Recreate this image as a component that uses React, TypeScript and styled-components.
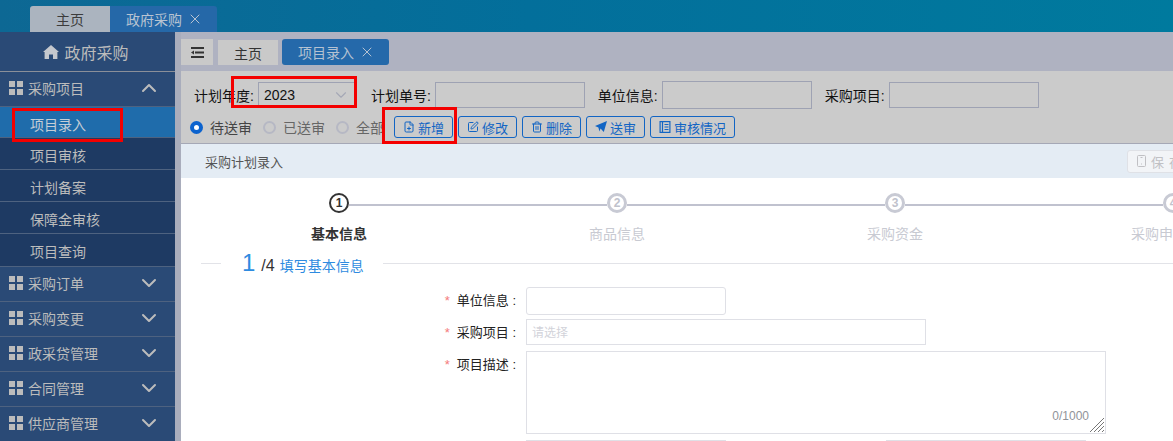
import React from 'react';
import styled, { createGlobalStyle } from 'styled-components';
import { ChevronDown, ChevronUp, X, FilePlus, SquarePen, Trash2 } from 'lucide-react';

const FONT = '"Liberation Sans", "Noto Sans CJK SC", sans-serif';

const GlobalStyle = createGlobalStyle`
  html, body {
    margin: 0;
    padding: 0;
    overflow: hidden;
    font-family: ${FONT};
  }
  * { box-sizing: border-box; }
`;

// --------------------------------------------------------------- //
//                         Page skeleton                           //
// --------------------------------------------------------------- //

const Page = styled.div`
  position: relative;
  width: 1173px;
  height: 441px;
  overflow: hidden;
  background: #fff;
`;

const TopBar = styled.div`
  height: 32px;
  padding: 6px 0 0 30px;
  display: flex;
  background: linear-gradient(90deg, #0d6894 0%, #036f9b 45%, #007a9e 100%);
`;

const TopTab = styled.div<{ $active?: boolean }>`
  height: 26px;
  width: ${(p) => (p.$active ? '107px' : '80px')};
  padding-left: ${(p) => (p.$active ? '2px' : '0')};
  display: flex;
  align-items: center;
  justify-content: center;
  gap: 5px;
  font-size: 14px;
  border-radius: ${(p) => (p.$active ? '0 3px 0 0' : '3px 0 0 0')};
  background: ${(p) => (p.$active ? '#2568a8' : '#abb4bf')};
  color: ${(p) => (p.$active ? '#b9c4d2' : '#3c3c3c')};
`;

const Body = styled.div`
  display: flex;
  height: 409px;
`;

// --------------------------------------------------------------- //
//                            Sidebar                              //
// --------------------------------------------------------------- //

const Sidebar = styled.div`
  width: 175px;
  flex: none;
  background: #2a4a76;
  color: #bcbcbc;
`;

const SideTitle = styled.div`
  height: 40px;
  display: flex;
  align-items: center;
  justify-content: center;
  gap: 5px;
  padding-right: 3px;
  font-size: 16px;
  border-bottom: 1px solid #8a8f99;
`;

const GroupHeader = styled.div`
  height: 35px;
  display: flex;
  align-items: center;
  padding: 0 14px 2px 9px;
  font-size: 14px;
  border-bottom: 1px solid #4e6280;
  svg.chev { margin-left: auto; }
`;

const GroupLabel = styled.span`
  margin-left: 5px;
`;

const SubItem = styled.div<{ $active?: boolean; $last?: boolean }>`
  height: ${(p) => (p.$active ? '31px' : p.$last ? '33px' : '32px')};
  display: flex;
  align-items: center;
  padding: ${(p) => (p.$active ? '4px' : p.$last ? '2px' : '3px')} 0 0 30px;
  font-size: 14px;
  background: ${(p) => (p.$active ? '#1f6cab' : '#1e3a63')};
  color: ${(p) => (p.$active ? '#c5cdd6' : '#bcbcbc')};
  border-bottom: 1px solid #4e6280;
`;

const GridIcon = () => (
  <svg width="14" height="14" viewBox="0 0 14 14" fill="#bcbcbc">
    <rect x="0" y="0" width="6" height="6" />
    <rect x="8" y="0" width="6" height="6" />
    <rect x="0" y="8" width="6" height="6" />
    <rect x="8" y="8" width="6" height="6" />
  </svg>
);

const HomeIcon = () => (
  <svg width="16" height="14" viewBox="0 0 16 14" fill="#c4c8ce">
    <path d="M8 0 L16 7 L14.4 7 L14.4 14 L10 14 L10 9.5 L6 9.5 L6 14 L1.6 14 L1.6 7 L0 7 Z" />
  </svg>
);

const Gutter = styled.div`
  width: 6px;
  flex: none;
  background: #a9adbc;
`;

// --------------------------------------------------------------- //
//                          Main column                            //
// --------------------------------------------------------------- //

const Main = styled.div`
  flex: 1;
  min-width: 0;
  overflow: hidden;
`;

const TabStrip = styled.div`
  height: 39px;
  margin-left: -6px;
  padding: 7px 0 0 6px;
  display: flex;
  align-items: flex-start;
  background: #afb2c1;
`;

const MenuButton = styled.div`
  width: 32px;
  height: 26px;
  display: flex;
  align-items: center;
  justify-content: center;
  background: #c9c9c9;
`;

const InnerTab = styled.div<{ $active?: boolean }>`
  height: ${(p) => (p.$active ? '26px' : '25px')};
  width: ${(p) => (p.$active ? '107px' : '60px')};
  margin: ${(p) => (p.$active ? '0 0 0 4px' : '1px 0 0 5px')};
  padding-left: ${(p) => (p.$active ? '2px' : '0')};
  display: flex;
  align-items: center;
  justify-content: center;
  gap: 5px;
  font-size: 14px;
  border-radius: ${(p) => (p.$active ? '3px' : '0')};
  background: ${(p) => (p.$active ? '#2569aa' : '#c9c9c9')};
  color: ${(p) => (p.$active ? '#b5c2d2' : '#333')};
`;

const Toolbar = styled.div`
  height: 73px;
  padding: 11px 0 0 13px;
  background: #cbcbcb;
  border-bottom: 1px solid #a5a8b6;
`;

const FilterRow = styled.div`
  display: flex;
  align-items: center;
  height: 26px;
  font-size: 14px;
  color: #111;
`;

const FilterLabel = styled.span`
  margin-right: 4px;
  white-space: nowrap;
`;

const FilterInput = styled.div<{ $tall?: boolean }>`
  width: 150px;
  height: ${(p) => (p.$tall ? '28px' : '26px')};
  margin-right: 13px;
  border: 1px solid #9ea2b3;
`;

const YearSelect = styled.div`
  width: 99px;
  height: 26px;
  margin-right: 14px;
  padding: 0 6px 0 5px;
  display: flex;
  align-items: center;
  justify-content: space-between;
  font-size: 14px;
  color: #111;
  border: 1px solid #9ea2b3;
`;

const ActionRow = styled.div`
  display: flex;
  align-items: center;
  height: 22px;
  margin-top: 8px;
  margin-left: -4px;
`;

const Radio = styled.span<{ $checked?: boolean }>`
  width: 13px;
  height: 13px;
  flex: none;
  border-radius: 50%;
  border: ${(p) => (p.$checked ? '4px solid #0c63ce' : '2px solid #b6b8c4')};
  background: ${(p) => (p.$checked ? '#fff' : 'transparent')};
`;

const RadioLabel = styled.span<{ $checked?: boolean }>`
  margin: 0 11px 0 7px;
  font-size: 14px;
  white-space: nowrap;
  color: ${(p) => (p.$checked ? '#444' : '#666')};
`;

const ActionButton = styled.div<{ $first?: boolean }>`
  height: 22px;
  margin-left: ${(p) => (p.$first ? '-1px' : '5px')};
  padding: 0 8px;
  display: flex;
  align-items: center;
  gap: 3px;
  font-size: 13px;
  white-space: nowrap;
  color: #1265c4;
  border: 1px solid #1265c4;
  border-radius: 3px;
`;

const PageHeader = styled.div`
  height: 34px;
  width: 1016px;
  padding-left: 24px;
  display: flex;
  align-items: center;
  justify-content: space-between;
  font-size: 13px;
  color: #555;
  background: #e4ecf4;
`;

const SaveButton = styled.div`
  width: 70px;
  height: 23px;
  padding-left: 9px;
  display: flex;
  align-items: center;
  gap: 5px;
  font-size: 13px;
  letter-spacing: 5px;
  white-space: nowrap;
  color: #c0c0c4;
  background: #f2f4f7;
  border: 1px solid #dfe1e6;
  border-radius: 3px;
`;

// --------------------------------------------------------------- //
//                        Steps and the form                       //
// --------------------------------------------------------------- //

const Steps = styled.div`
  display: grid;
  grid-template-columns: repeat(4, 278px);
  padding: 15px 0 0 19px;
`;

const Step = styled.div<{ $active?: boolean; $last?: boolean }>`
  position: relative;
  display: flex;
  flex-direction: column;
  align-items: center;
  font-size: 14px;
  white-space: nowrap;
  font-weight: ${(p) => (p.$active ? 700 : 400)};
  color: ${(p) => (p.$active ? '#333' : '#c8cad2')};
  &::after {
    content: ${(p) => (p.$last ? 'none' : '""')};
    position: absolute;
    top: 11px;
    left: calc(50% + 10px);
    width: 258px;
    height: 2px;
    background: #c0c2cf;
  }
`;

const StepCircle = styled.div<{ $active?: boolean }>`
  width: 20px;
  height: 20px;
  margin-bottom: 10px;
  display: flex;
  align-items: center;
  justify-content: center;
  font-size: 12px;
  font-weight: 700;
  border-radius: 50%;
  color: ${(p) => (p.$active ? '#333' : '#c0c2cc')};
  border: ${(p) => (p.$active ? '2.5px solid #333' : '3px solid #c8cad4')};
`;

const SectionTitle = styled.div`
  height: 30px;
  margin-top: 5px;
  display: flex;
  align-items: center;
`;

const SectionRule = styled.div<{ $grow?: boolean }>`
  height: 1px;
  background: #e2e3e8;
  ${(p) => (p.$grow ? 'flex: 1;' : 'width: 20px; margin-left: 20px;')}
`;

const SectionText = styled.div`
  width: 162px;
  padding-left: 21px;
  display: flex;
  align-items: baseline;
  white-space: nowrap;
`;

const SectionNumber = styled.span`
  font-size: 24px;
  margin-right: 6px;
  color: #2e8be0;
`;

const SectionTotal = styled.span`
  font-size: 16px;
  margin-right: 5px;
  color: #333;
`;

const SectionName = styled.span`
  font-size: 14px;
  color: #2e8be0;
`;

const Form = styled.div`
  padding-top: 9px;
  display: flex;
  flex-direction: column;
`;

const FormRow = styled.div<{ $gap?: number }>`
  display: flex;
  margin-top: ${(p) => p.$gap ?? 0}px;
`;

const FormLabel = styled.div`
  width: 345px;
  height: 26px;
  flex: none;
  padding-right: 10px;
  display: flex;
  justify-content: flex-end;
  align-items: flex-start;
  font-size: 13px;
  line-height: 28px;
  color: #222;
`;

const Star = styled.span`
  margin-right: 7px;
  color: #f47a7a;
`;

const TextInput = styled.div<{ $w: number; $h: number; $round?: boolean; $gap?: number }>`
  width: ${(p) => p.$w}px;
  height: ${(p) => p.$h}px;
  flex: none;
  margin-left: ${(p) => p.$gap ?? 0}px;
  padding-left: 5px;
  font-size: 12px;
  line-height: 26px;
  color: #d2d3da;
  border: 1px solid #dfe0e6;
  border-radius: ${(p) => (p.$round ? '3px' : '0')};
`;

const TextArea = styled.div`
  position: relative;
  width: 580px;
  height: 83px;
  flex: none;
  border: 1px solid #dfe0e6;
`;

const Counter = styled.span`
  position: absolute;
  right: 16px;
  bottom: 10px;
  font-size: 12px;
  color: #909399;
`;

const Resizer = styled.svg`
  position: absolute;
  right: 1px;
  bottom: 1px;
`;

// Red annotation boxes drawn over the screenshot
const Marker = styled.div<{ $x: number; $y: number; $w: number; $h: number }>`
  position: absolute;
  left: ${(p) => p.$x}px;
  top: ${(p) => p.$y}px;
  width: ${(p) => p.$w}px;
  height: ${(p) => p.$h}px;
  border: 3px solid #f40000;
`;

// --------------------------------------------------------------- //
//                              Data                               //
// --------------------------------------------------------------- //

const subItems = ['项目审核', '计划备案', '保障金审核', '项目查询'];
const groups = ['采购订单', '采购变更', '政采贷管理', '合同管理', '供应商管理'];
const stepNames = ['基本信息', '商品信息', '采购资金', '采购申请信息'];

const PlaneIcon = () => (
  <svg width="12" height="12" viewBox="0 0 12 12" fill="#1265c4">
    <path d="M12 0 L8.8 11 L5.6 7.6 L4.4 10.6 L3.4 6.4 L0 5 Z" />
  </svg>
);

const ListIcon = () => (
  <svg width="12" height="12" viewBox="0 0 12 12" fill="none" stroke="#1265c4" strokeWidth="1.2">
    <rect x="1.1" y="0.6" width="9.8" height="10.8" />
    <path d="M3.5 1 V11 M5.5 3.5 H9.5 M5.5 6 H9.5 M5.5 8.5 H9.5" />
  </svg>
);

const MenuIcon = () => (
  <svg width="13" height="11" viewBox="0 0 13 11" fill="#333">
    <rect x="0" y="0" width="13" height="2" />
    <rect x="4" y="4.5" width="9" height="2" />
    <rect x="0" y="9" width="13" height="2" />
    <path d="M0 5.5 L3 3.5 V7.5 Z" />
  </svg>
);

const SaveIcon = () => (
  <svg width="9" height="12" viewBox="0 0 9 12" fill="none" stroke="#c0c0c4" strokeWidth="1">
    <rect x="0.5" y="0.5" width="8" height="11" rx="1" />
    <path d="M3.5 2.5 H5.5 M4.5 8.5 V9.5" />
  </svg>
);

const App = () => (
  <Page>
    <GlobalStyle />
    <TopBar>
      <TopTab>主页</TopTab>
      <TopTab $active>
        政府采购 <X size={16} strokeWidth={1.5} />
      </TopTab>
    </TopBar>
    <Body>
      <Sidebar>
        <SideTitle>
          <HomeIcon /> 政府采购
        </SideTitle>
        <GroupHeader>
          <GridIcon />
          <GroupLabel>采购项目</GroupLabel>
          <ChevronUp className="chev" size={24} />
        </GroupHeader>
        <SubItem $active>项目录入</SubItem>
        {subItems.map((name, i) => (
          <SubItem key={name} $last={i === subItems.length - 1}>
            {name}
          </SubItem>
        ))}
        {groups.map((name) => (
          <GroupHeader key={name}>
            <GridIcon />
            <GroupLabel>{name}</GroupLabel>
            <ChevronDown className="chev" size={24} />
          </GroupHeader>
        ))}
      </Sidebar>
      <Gutter />
      <Main>
        <TabStrip>
          <MenuButton>
            <MenuIcon />
          </MenuButton>
          <InnerTab>主页</InnerTab>
          <InnerTab $active>
            项目录入 <X size={16} strokeWidth={1.5} />
          </InnerTab>
        </TabStrip>
        <Toolbar>
          <FilterRow>
            <FilterLabel>计划年度:</FilterLabel>
            <YearSelect>
              2023
              <ChevronDown size={18} strokeWidth={1.5} color="#a5a8b6" />
            </YearSelect>
            <FilterLabel>计划单号:</FilterLabel>
            <FilterInput />
            <FilterLabel>单位信息:</FilterLabel>
            <FilterInput $tall />
            <FilterLabel>采购项目:</FilterLabel>
            <FilterInput />
          </FilterRow>
          <ActionRow>
            <Radio $checked />
            <RadioLabel $checked>待送审</RadioLabel>
            <Radio />
            <RadioLabel>已送审</RadioLabel>
            <Radio />
            <RadioLabel>全部</RadioLabel>
            <ActionButton $first>
              <FilePlus size={12} />
              新增
            </ActionButton>
            <ActionButton>
              <SquarePen size={12} />
              修改
            </ActionButton>
            <ActionButton>
              <Trash2 size={12} />
              删除
            </ActionButton>
            <ActionButton>
              <PlaneIcon />
              送审
            </ActionButton>
            <ActionButton>
              <ListIcon />
              审核情况
            </ActionButton>
          </ActionRow>
        </Toolbar>
        <PageHeader>
          采购计划录入
          <SaveButton>
            <SaveIcon />
            保存
          </SaveButton>
        </PageHeader>
        <Steps>
          {stepNames.map((name, i) => (
            <Step key={name} $active={i === 0} $last={i === 3}>
              <StepCircle $active={i === 0}>{i + 1}</StepCircle>
              {name}
            </Step>
          ))}
        </Steps>
        <SectionTitle>
          <SectionRule />
          <SectionText>
            <SectionNumber>1</SectionNumber>
            <SectionTotal>/4</SectionTotal>
            <SectionName>填写基本信息</SectionName>
          </SectionText>
          <SectionRule $grow />
        </SectionTitle>
        <Form>
          <FormRow>
            <FormLabel>
              <Star>*</Star>单位信息 :
            </FormLabel>
            <TextInput $w={200} $h={28} $round />
          </FormRow>
          <FormRow $gap={4}>
            <FormLabel>
              <Star>*</Star>采购项目 :
            </FormLabel>
            <TextInput $w={400} $h={26}>
              请选择
            </TextInput>
          </FormRow>
          <FormRow $gap={6}>
            <FormLabel>
              <Star>*</Star>项目描述 :
            </FormLabel>
            <TextArea>
              <Counter>0/1000</Counter>
              <Resizer width="15" height="15" viewBox="0 0 15 15" stroke="#777" strokeWidth="1">
                <path d="M1 15 L15 1 M5 15 L15 5 M9 15 L15 9 M13 15 L15 13" />
              </Resizer>
            </TextArea>
          </FormRow>
          <FormRow $gap={6}>
            <FormLabel />
            <TextInput $w={200} $h={28} />
            <TextInput $w={200} $h={28} $gap={160} />
          </FormRow>
        </Form>
      </Main>
    </Body>
    <Marker $x={231} $y={76} $w={126} $h={32} />
    <Marker $x={12} $y={108} $w={111} $h={34} />
    <Marker $x={382} $y={107} $w={75} $h={37} />
  </Page>
);

export default App;
